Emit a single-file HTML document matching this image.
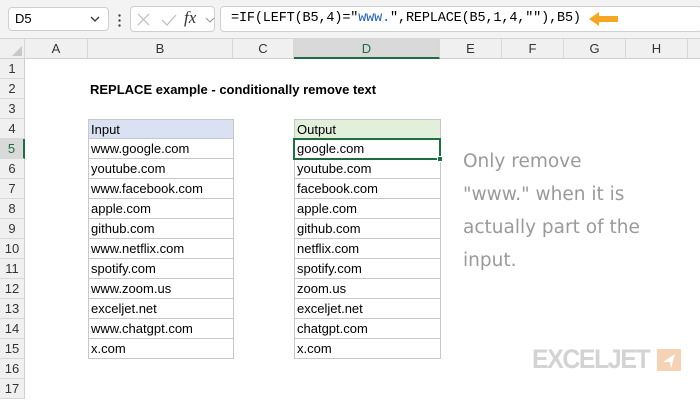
<!DOCTYPE html>
<html><head><meta charset="utf-8"><style>
*{margin:0;padding:0;box-sizing:border-box}
body{width:700px;height:400px;background:#fff;position:relative;overflow:hidden;font-family:"Liberation Sans","DejaVu Sans",sans-serif;font-size:13px;color:#000}
.a{position:absolute}
.top{left:0;top:0;width:700px;height:39px;background:#f3f3f3;border-bottom:1px solid #d6d6d6}
.box{background:#fff;border:1px solid #d0d0d0;border-radius:4px}
.hdr{top:39px;height:20px;background:#f0f0f0;border-bottom:1px solid #d0d0d0;border-right:1px solid #d8d8d8;text-align:center;line-height:20px;color:#333;font-size:13px}
.rh{left:0;width:25px;height:20px;background:#f0f0f0;border-bottom:1px solid #d8d8d8;border-right:1px solid #d0d0d0;text-align:center;line-height:20px;color:#333;font-size:13px}
.c{height:20px;line-height:20px;padding-left:2px;border:1px solid #c8c8c8;border-top:none;font-size:13px}
</style></head><body>
<div class="a top"></div>
<div class="a box" style="left:8px;top:7px;width:101px;height:24px"></div>
<div class="a" style="left:15px;top:11px;font-size:13px">D5</div>
<svg class="a" style="left:90px;top:15px" width="10" height="8"><path d="M1 2 L5 6 L9 2" fill="none" stroke="#333" stroke-width="1.3"/></svg>
<div class="a" style="left:118px;top:13px;width:3px;height:14px;background:radial-gradient(circle,#444 1px,transparent 1.4px) 0 0/3px 5px"></div>
<div class="a box" style="left:130px;top:6px;width:85px;height:26px"></div>
<svg class="a" style="left:136px;top:12px" width="80" height="16"><path d="M2 2 L13 13 M13 2 L2 13" stroke="#bbb" stroke-width="1.2"/><path d="M26 8 L31 13 L40 3" fill="none" stroke="#bbb" stroke-width="1.2"/><path d="M70 6 L74 10 L78 6" fill="none" stroke="#999" stroke-width="1.1"/></svg>
<div class="a" style="left:184px;top:8px;font-family:'Liberation Serif',serif;font-style:italic;font-size:17px;color:#333">fx</div>
<div class="a box" style="left:220px;top:6px;width:482px;height:26px"></div>
<div class="a" style="left:231px;top:11px;font-family:'Liberation Mono',monospace;font-size:13.5px;letter-spacing:-0.15px;white-space:nowrap">=IF(LEFT(B5,4)="<span style="color:#1f5fb0">www.</span>",REPLACE(B5,1,4,""),B5)</div>
<svg class="a" style="left:587px;top:11px" width="34" height="18"><path d="M2 8 L12 1 L12 5 L31 5 L31 11 L12 11 L12 15 Z" fill="#f5a623"/></svg>
<div class="a hdr" style="left:0;width:25px"></div>
<svg class="a" style="left:12px;top:46px" width="11" height="11"><path d="M10 0 L10 10 L0 10 Z" fill="#c8c8c8"/></svg>
<div class="a hdr" style="left:25px;width:63px">A</div>
<div class="a hdr" style="left:88px;width:145px">B</div>
<div class="a hdr" style="left:233px;width:61px">C</div>
<div class="a hdr" style="left:294px;width:146px;background:#d9d9d9;color:#1e6e42;border-bottom:2px solid #1e6e42">D</div>
<div class="a hdr" style="left:440px;width:62px">E</div>
<div class="a hdr" style="left:502px;width:62px">F</div>
<div class="a hdr" style="left:564px;width:62px">G</div>
<div class="a hdr" style="left:626px;width:62px">H</div>
<div class="a hdr" style="left:688px;width:20px"></div>
<div id="rows"></div>
<script>
var h='';for(var i=1;i<=17;i++){var t=39+20*i;var s=i==5?'background:#d9d9d9;color:#1e6e42;border-right:2px solid #1e6e42':'';h+='<div class="a rh" style="top:'+t+'px;'+s+'">'+i+'</div>';}
var inp=['www.google.com','youtube.com','www.facebook.com','apple.com','github.com','www.netflix.com','spotify.com','www.zoom.us','exceljet.net','www.chatgpt.com','x.com'];
h+='<div class="a c" style="left:88px;top:119px;width:146px;background:#d9e1f2;border-top:1px solid #c8c8c8">Input</div>';
h+='<div class="a c" style="left:294px;top:119px;width:147px;background:#e2efda;border-top:1px solid #c8c8c8">Output</div>';
for(var j=0;j<11;j++){var t=139+20*j;h+='<div class="a c" style="left:88px;top:'+t+'px;width:146px">'+inp[j]+'</div>';h+='<div class="a c" style="left:294px;top:'+t+'px;width:147px">'+inp[j].replace(/^www\./,'')+'</div>';}
document.getElementById('rows').innerHTML=h;
</script>
<div class="a" style="left:293px;top:138px;width:148px;height:22px;border:2px solid #1e6e42"></div>
<div class="a" style="left:437px;top:156px;width:6px;height:6px;background:#1e6e42;border:1px solid #fff"></div>
<div class="a" style="left:90px;top:82px;font-weight:bold;font-size:13px">REPLACE example - conditionally remove text</div>
<div class="a" style="left:463px;top:145px;font-family:'DejaVu Sans',sans-serif;font-size:18.5px;line-height:33px;color:#9a9a9a;width:240px">Only remove<br>"www." when it is<br>actually part of the<br>input.</div>
<div class="a" style="left:532px;top:344px;font-family:'Liberation Sans',sans-serif;font-weight:bold;font-size:27px;color:#d3d3d3;letter-spacing:-1.5px;transform:scaleX(0.92);transform-origin:left">EXCELJET</div>
<svg class="a" style="left:657px;top:349px" width="24" height="22"><rect width="24" height="22" fill="#f7d3b5"/><path d="M18 5 L6 13 L13 13 L14 19 Z" fill="#fff"/></svg>
</body></html>
